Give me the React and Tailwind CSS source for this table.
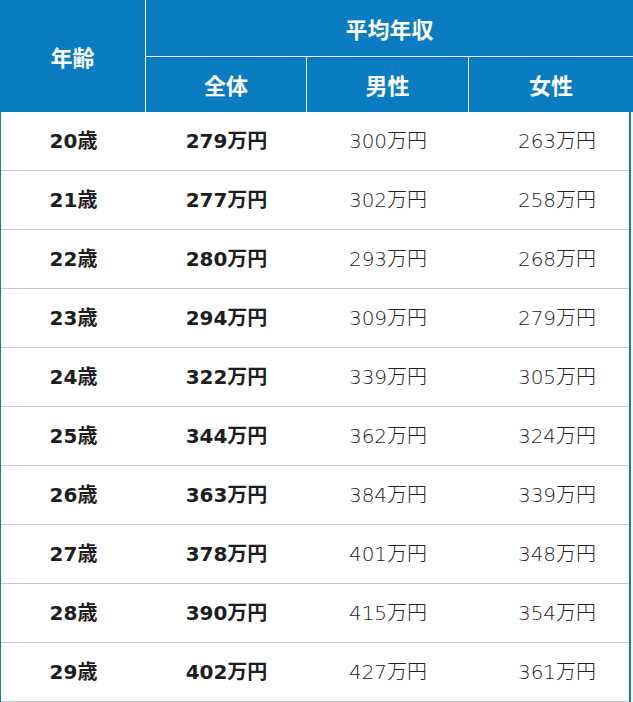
import React from 'react';

const rows = [
  ['20歳', '279万円', '300万円', '263万円'],
  ['21歳', '277万円', '302万円', '258万円'],
  ['22歳', '280万円', '293万円', '268万円'],
  ['23歳', '294万円', '309万円', '279万円'],
  ['24歳', '322万円', '339万円', '305万円'],
  ['25歳', '344万円', '362万円', '324万円'],
  ['26歳', '363万円', '384万円', '339万円'],
  ['27歳', '378万円', '401万円', '348万円'],
  ['28歳', '390万円', '415万円', '354万円'],
  ['29歳', '402万円', '427万円', '361万円'],
];

const headFont = { fontFamily: '"Noto Sans CJK JP", "Noto Sans", sans-serif' };
const bodyFont = { fontFamily: '"DejaVu Sans", "Noto Sans CJK JP", sans-serif' };

export default function App() {
  return (
    <div className="w-[633px] bg-white">
      <div className="grid grid-cols-[146px_161px_162px_1fr] bg-[#0a7cc1] text-white font-bold text-[22px]" style={headFont}>
        <div className="row-span-2 flex items-center justify-center border-r border-white">年齢</div>
        <div className="col-span-3 h-[57px] flex items-center justify-center border-b border-white">平均年収</div>
        <div className="h-[55px] flex items-center justify-center border-r border-white">全体</div>
        <div className="h-[55px] flex items-center justify-center border-r border-white">男性</div>
        <div className="h-[55px] flex items-center justify-center">女性</div>
      </div>
      <div className="border-l border-[#1a7fa6] border-r-2 border-r-[#0a7cc1] mr-[2px]" style={bodyFont}>
        {rows.map((r, i) => (
          <div key={i} className="grid grid-cols-[145px_161px_162px_1fr] h-[59px] border-b border-[#c8c8c8] text-[20px] text-[#1e1e1e]">
            <div className="flex items-center justify-center font-bold">{r[0]}</div>
            <div className="flex items-center justify-center font-bold">{r[1]}</div>
            <div className="flex items-center justify-center font-extralight text-[#222]">{r[2]}</div>
            <div className="flex items-center justify-center pl-[16px] font-extralight text-[#222]">{r[3]}</div>
          </div>
        ))}
      </div>
    </div>
  );
}
